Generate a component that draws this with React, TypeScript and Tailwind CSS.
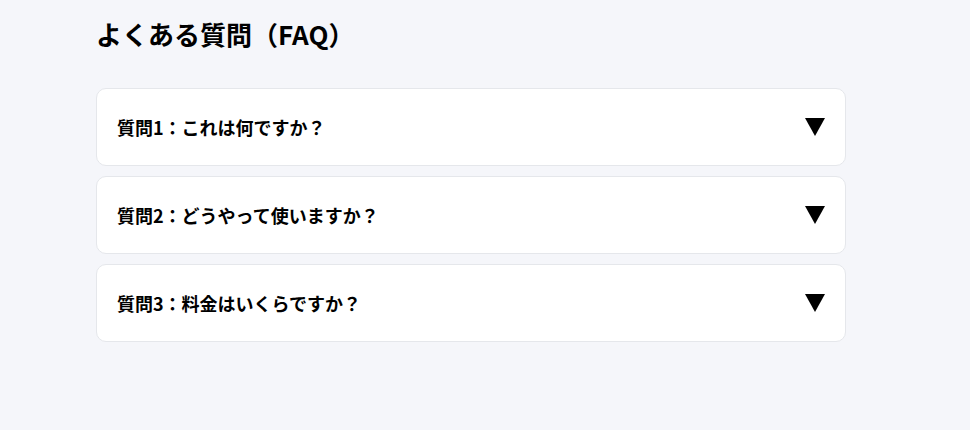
const faqs = [
  "質問1：これは何ですか？",
  "質問2：どうやって使いますか？",
  "質問3：料金はいくらですか？",
]

function Caret() {
  return (
    <svg width="20" height="18" viewBox="0 0 20 18" className="shrink-0">
      <polygon points="0,0 20,0 10,18" fill="#000" />
    </svg>
  )
}

export default function App() {
  return (
    <div
      className="min-h-screen bg-[#f5f6fa] px-[96px] pt-[14px] text-black"
      style={{ fontFamily: '"Noto Sans CJK JP", "Noto Sans", sans-serif' }}
    >
      <div className="w-[750px]">
        <h1 className="text-[26px] font-bold leading-[40px] mb-[34px]">よくある質問（FAQ）</h1>
        <div className="flex flex-col gap-[10px]">
          {faqs.map((q) => (
            <div
              key={q}
              className="flex items-center justify-between rounded-[10px] border border-[#e5e7eb] bg-white px-5 py-6"
            >
              <span className="text-[18px] font-semibold leading-[28px]">{q}</span>
              <Caret />
            </div>
          ))}
        </div>
      </div>
    </div>
  )
}
